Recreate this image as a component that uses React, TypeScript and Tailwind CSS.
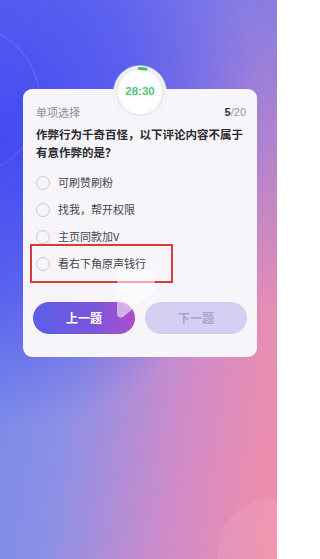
const options = ["可刷赞刷粉", "找我，帮开权限", "主页同款加V", "看右下角原声钱行"];

function Timer() {
  return (
    <div className="absolute left-1/2 top-[-23px] h-[52px] w-[52px] -translate-x-1/2 rounded-full bg-white shadow-[0_0_0_1px_rgba(230,230,240,0.6)]">
      <svg className="absolute inset-0" width="52" height="52" viewBox="0 0 52 52">
        <circle cx="26" cy="26" r="23.5" fill="none" stroke="#ebecf2" strokeWidth="3" />
        <circle
          cx="26"
          cy="26"
          r="23.5"
          fill="none"
          stroke="#3fc173"
          strokeWidth="3"
          strokeLinecap="round"
          strokeDasharray="7 200"
          transform="rotate(-92 26 26)"
        />
      </svg>
      <div className="relative flex h-full items-center justify-center font-['Liberation_Sans',sans-serif] text-[11.5px] font-bold text-[#4cc47a]">
        28:30
      </div>
    </div>
  );
}

export default function App() {
  return (
    <div className="relative h-[559px] w-[277px] overflow-hidden bg-[radial-gradient(ellipse_120%_65%_at_0%_25%,rgba(66,70,242,0.95)_0%,rgba(66,70,242,0.55)_45%,rgba(66,70,242,0)_80%),linear-gradient(180deg,rgba(110,118,236,0.75)_0%,rgba(110,118,236,0.35)_30%,rgba(110,118,236,0)_55%),linear-gradient(98deg,#7088ea_0%,#8c90e6_35%,#cf8bc9_68%,#f38ea6_100%)] font-['Noto_Sans_CJK_SC','Noto_Sans',sans-serif]">
      {/* faint background decoration */}
      <div className="absolute left-[-110px] top-[25px] h-[150px] w-[150px] rounded-full border border-white/15" />
      <div className="absolute bottom-[-50px] right-[-50px] h-[110px] w-[110px] rounded-full bg-white/[0.07]" />

      <div className="relative ml-[23px] mt-[89px] w-[234px] rounded-[9px] bg-[#f7f5fa] pb-[23px] pl-[13px] pr-[11px] pt-[16px]">
        <Timer />

        <div className="flex items-center justify-between text-[11px] leading-[14px]">
          <span className="text-[#8e8e96]">单项选择</span>
          <span className="font-['Liberation_Sans',sans-serif] text-[#9a9aa2]">
            <span className="font-bold text-[#333]">5</span>/20
          </span>
        </div>

        <p className="mt-[6px] text-[11.5px] font-bold leading-[18px] text-[#2a2a30]">
          作弊行为千奇百怪，以下评论内容不属于有意作弊的是？
        </p>

        <div className="mt-[8px] flex flex-col">
          {options.map((opt, i) => (
            <div key={opt} className="relative flex h-[27px] items-center gap-[8px]">
              <span className="h-[14px] w-[14px] rounded-full border-[1.5px] border-[#c9c9d2]" />
              <span className="text-[11px] text-[#45454d]">{opt}</span>
              {i === 3 && (
                <div className="absolute left-[-6px] top-[-6px] h-[39px] w-[143px] border-2 border-[#d93b3b]" />
              )}
            </div>
          ))}
        </div>

        <div className="relative ml-[-3px] mr-[-1px] mt-[25px] flex gap-[10px]">
          <button className="flex h-[32px] flex-1 items-center justify-center rounded-full bg-[linear-gradient(90deg,#5a5fe8,#7656dc_55%,#ad4fcb)] text-[12px] font-bold text-white">
            上一题
          </button>
          <button className="flex h-[32px] flex-1 items-center justify-center rounded-full bg-[#d3cff2] text-[12px] font-bold text-[#a7a3d6]">
            下一题
          </button>
        </div>

        {/* translucent watermark */}
        <svg
          className="pointer-events-none absolute left-[92px] top-[179px]"
          width="42"
          height="52"
          viewBox="0 0 42 52"
        >
          <path
            d="M2 2 H40 V20 Q40 23 37 25 L8 49 Q4 51 2 47 Z"
            fill="#ffffff"
            fillOpacity="0.55"
          />
        </svg>
      </div>
    </div>
  );
}
